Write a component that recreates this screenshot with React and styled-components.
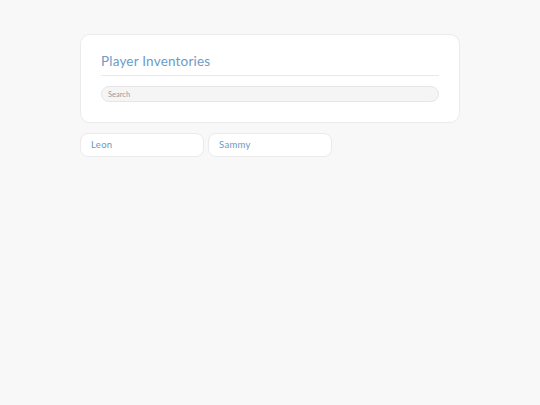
import React from 'react';
import styled, { createGlobalStyle } from 'styled-components';

const GlobalStyle = createGlobalStyle`
  body {
    margin: 0;
    background-color: #f8f8f8;
    font-family: "Lato", "Noto Sans", sans-serif;
  }
`;

const Container = styled.div`
  width: 380px;
  margin: 0 auto;
  padding-top: 34px;
`;
const Header = styled.div`
  background-color: #fff;
  border: 1px solid #ebebeb;
  border-radius: 10px;
  padding: 17px 20px 20px;
`;
const Title = styled.h1`
  margin: 0;
  padding-bottom: 5px;
  border-bottom: 1px solid #e8e8e8;
  font-size: 13.5px;
  font-weight: 400;
  line-height: 18px;
  color: #6b9cc8;
  letter-spacing: 0.2px;
`;
const SearchInput = styled.input`
  display: block;
  box-sizing: border-box;
  width: 100%;
  height: 16px;
  margin-top: 10px;
  padding: 0 6px;
  border: 1px solid #e6e6e6;
  border-radius: 8px;
  background-color: #f5f5f5;
  font-family: inherit;
  font-size: 7.5px;
  color: #555;
  &::placeholder {
    color: #999;
  }
  &:focus {
    outline: none;
  }
`;
const PlayerList = styled.div`
  display: flex;
  flex-flow: row wrap;
  gap: 4px;
  margin-top: 10px;
`;
const PlayerItem = styled.a`
  display: block;
  box-sizing: border-box;
  width: 124px;
  height: 24px;
  padding: 0 10px;
  background-color: #fff;
  border: 1px solid #ebebeb;
  border-radius: 8px;
  font-size: 9.5px;
  line-height: 22px;
  color: #6d98c0;
  letter-spacing: 0.3px;
  cursor: pointer;
`;

const players = ['Leon', 'Sammy'];

export default function App() {
  return (
    <>
      <GlobalStyle />
      <Container>
        <Header>
          <Title>Player Inventories</Title>
          <SearchInput placeholder="Search" />
        </Header>
        <PlayerList>
          {players.map(name => <PlayerItem key={name}>{name}</PlayerItem>)}
        </PlayerList>
      </Container>
    </>
  );
}
